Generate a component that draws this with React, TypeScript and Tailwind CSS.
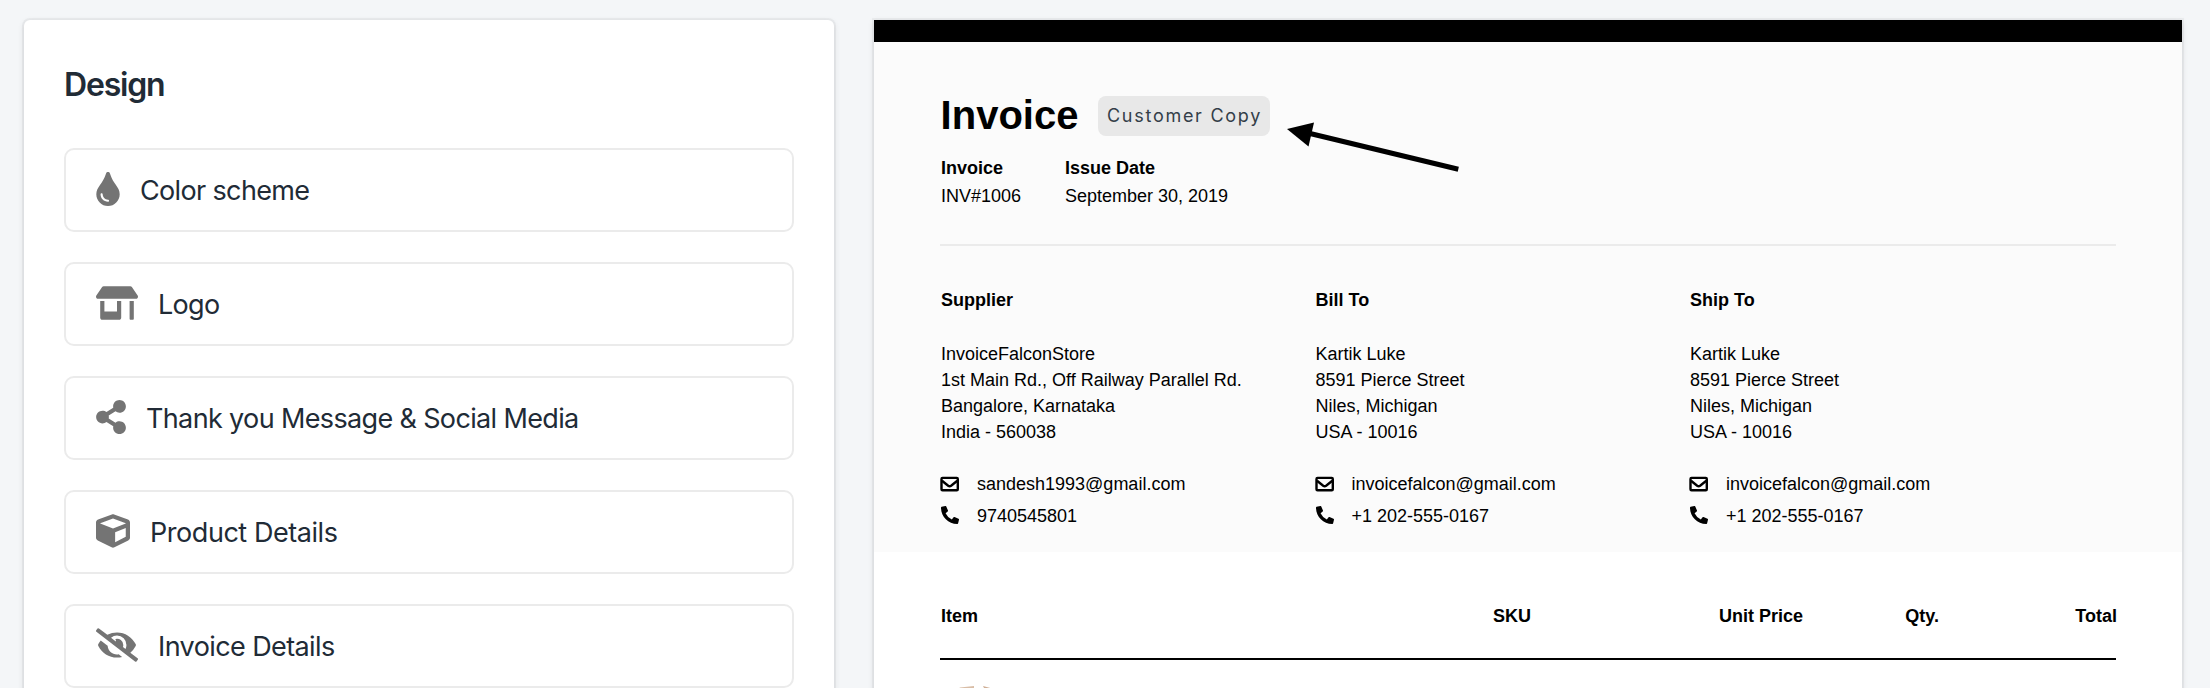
import { FaTint, FaStoreAlt, FaShareAlt, FaCube, FaEyeSlash, FaPhoneAlt } from "react-icons/fa";

const options = [
  { label: "Color scheme", icon: <FaTint className="h-[34px] w-[24px]" />, text: "tracking-[-0.65px]" },
  { label: "Logo", icon: <FaStoreAlt className="h-[34px] w-[42px]" />, text: "tracking-[-0.7px]" },
  { label: "Thank you Message & Social Media", icon: <FaShareAlt className="h-[34px] w-[30px]" />, text: "tracking-[-0.64px]" },
  { label: "Product Details", icon: <FaCube className="h-[34px] w-[34px]" />, text: "tracking-[-0.45px]" },
  { label: "Invoice Details", icon: <FaEyeSlash className="h-[34px] w-[42px]" />, text: "tracking-[-0.6px]" },
];

const parties = [
  {
    title: "Supplier",
    lines: ["InvoiceFalconStore", "1st Main Rd., Off Railway Parallel Rd.", "Bangalore, Karnataka", "India - 560038"],
    email: "sandesh1993@gmail.com",
    phone: "9740545801",
  },
  {
    title: "Bill To",
    lines: ["Kartik Luke", "8591 Pierce Street", "Niles, Michigan", "USA - 10016"],
    email: "invoicefalcon@gmail.com",
    phone: "+1 202-555-0167",
  },
  {
    title: "Ship To",
    lines: ["Kartik Luke", "8591 Pierce Street", "Niles, Michigan", "USA - 10016"],
    email: "invoicefalcon@gmail.com",
    phone: "+1 202-555-0167",
  },
];

function Envelope() {
  return (
    <svg className="-ml-px -mt-px" width="19" height="18" viewBox="0 0 19 18" fill="none" stroke="currentColor" strokeWidth="2.4">
      <rect x="1.5" y="2.9" width="16.3" height="12.3" rx="1" />
      <path d="M2 5.8 8.2 10.7Q9.65 11.7 11.1 10.7L17.3 5.8" />
    </svg>
  );
}

export default function App() {
  return (
    <div className="flex h-[688px] w-[2210px] gap-[40px] overflow-hidden bg-[#f4f6f8] pl-[24px] pt-[20px]">
      <section className="h-[720px] w-[810px] shrink-0 rounded-[6px] bg-white px-[40px] pt-[41px] font-['Inter',sans-serif] text-[#212b36] shadow-[0_0_0_2px_rgba(63,63,68,0.05),0_2px_6px_0_rgba(63,63,68,0.15)]">
        <h2 className="h-[87px] text-[32px] leading-[48px] font-semibold tracking-[-1.2px]">Design</h2>
        <div className="flex flex-col gap-[30px]">
          {options.map((o) => (
            <div key={o.label} className="flex h-[84px] items-center gap-[20px] rounded-[10px] border-2 border-[#ebebeb] pl-[30px]">
              <span className="mb-[2px] text-[#747474]">{o.icon}</span>
              <span className={"pt-[2px] text-[27px] leading-[40px] " + o.text}>{o.label}</span>
            </div>
          ))}
        </div>
      </section>

      <section className="h-[720px] w-[1308px] shrink-0 bg-white font-['Liberation_Sans',Arial,sans-serif] text-[18px] leading-[26px] text-black shadow-[0_0_0_2px_rgba(63,63,68,0.05),0_2px_6px_0_rgba(63,63,68,0.15)]">
        <div className="h-[22px] bg-black" />
        <div className="h-[510px] bg-[#fbfbfb] px-[66px] pt-[54px]">
          <div className="relative flex h-[40px] items-center">
            <h1 className="w-[158px] pb-[3px] pl-[0.6px] text-[40px] leading-[40px] font-bold">Invoice</h1>
            <span className="flex h-[40px] w-[172px] items-center justify-center rounded-[8px] bg-[#e8e8e8] pl-[1px] font-['Inter',sans-serif] text-[18px] tracking-[1.72px] whitespace-nowrap text-[#343e49]">
              Customer Copy
            </span>
            <svg className="absolute left-[346px] top-[24px]" width="176" height="54" viewBox="0 0 176 54">
              <path d="M22 13 172.3 49.3" stroke="#000" strokeWidth="5" fill="none" />
              <path d="M1 9 28 2.5 22.5 26.5Z" fill="#000" />
            </svg>
          </div>
          <div className="mt-[18px] flex h-[90px] gap-[44px] pl-px leading-[28px]">
            <div className="w-[80px]">
              <div className="font-bold">Invoice</div>
              <div>INV#1006</div>
            </div>
            <div>
              <div className="font-bold">Issue Date</div>
              <div>September 30, 2019</div>
            </div>
          </div>
          <div className="h-[2px] bg-[#ebebeb]" />
          <div className="grid grid-cols-[374.5px_374.5px_1fr] pl-px pt-[41px]">
            {parties.map((p) => (
              <div key={p.title}>
                <div className="mb-[28px] font-bold">{p.title}</div>
                {p.lines.map((l) => (
                  <div key={l}>{l}</div>
                ))}
                <div className="mt-[26px] flex items-center gap-[18px]">
                  <Envelope />
                  {p.email}
                </div>
                <div className="mt-[6px] flex items-center gap-[18px]">
                  <FaPhoneAlt className="-mt-[2px] size-[18px]" />
                  {p.phone}
                </div>
              </div>
            ))}
          </div>
        </div>
        <div className="px-[66px] pt-[51px]">
          <div className="flex h-[57px] border-b-2 border-black pl-px font-bold">
            <div className="w-[552px]">Item</div>
            <div className="w-[150px]">SKU</div>
            <div className="w-[160px] text-right">Unit Price</div>
            <div className="w-[136px] text-right">Qty.</div>
            <div className="-mr-px flex-1 text-right">Total</div>
          </div>
          <svg className="ml-[18px] mt-[25px]" width="44" height="12" viewBox="0 0 44 12">
            <path d="M2 2.5 16 1v3H0Z" fill="#d9bda6" />
            <path d="M25 1 33 3.2V5H27Z" fill="#cfae95" />
          </svg>
        </div>
      </section>
    </div>
  );
}
